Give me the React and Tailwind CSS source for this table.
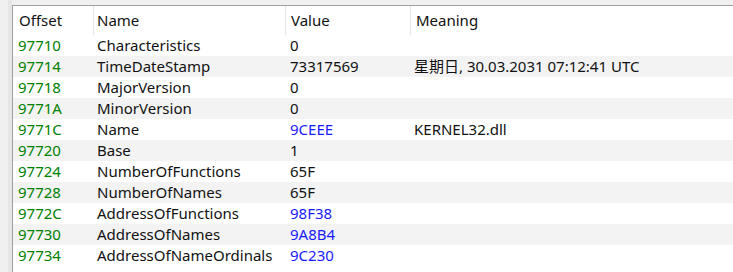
import React from "react";

const rows = [
  ["97710", "Characteristics", "0", false, ""],
  ["97714", "TimeDateStamp", "73317569", false, "星期日, 30.03.2031 07:12:41 UTC"],
  ["97718", "MajorVersion", "0", false, ""],
  ["9771A", "MinorVersion", "0", false, ""],
  ["9771C", "Name", "9CEEE", true, "KERNEL32.dll"],
  ["97720", "Base", "1", false, ""],
  ["97724", "NumberOfFunctions", "65F", false, ""],
  ["97728", "NumberOfNames", "65F", false, ""],
  ["9772C", "AddressOfFunctions", "98F38", true, ""],
  ["97730", "AddressOfNames", "9A8B4", true, ""],
  ["97734", "AddressOfNameOrdinals", "9C230", true, ""],
];

const font = { fontFamily: '"Noto Sans", "Noto Sans CJK SC", sans-serif' };

export default function App() {
  return (
    <div
      className="w-[733px] h-[272px] flex bg-[#f0f0f0] overflow-hidden text-[15px] leading-none text-[#111111]"
      style={font}
    >
      <div className="w-[8px] bg-[#f0f0f0]" />
      <div className="w-[4px] bg-[#e6e6e6]" />
      <div className="flex-1 flex flex-col">
        <div className="h-[5px] bg-[#f0f0f0]" />
        <div className="flex-1 bg-white border-t border-l border-[#a0a0a0]">
          <div className="grid grid-cols-[80px_192px_125px_1fr] h-[29px] items-center">
            <div className="pl-[6px]">Offset</div>
            <div className="h-full flex items-center border-l border-[#e5e5e5] pl-[3px]">Name</div>
            <div className="h-full flex items-center border-l border-[#e5e5e5] pl-[5px]">Value</div>
            <div className="h-full flex items-center border-l border-[#e5e5e5] pl-[5px]">Meaning</div>
          </div>
          {rows.map(([off, name, val, blue, meaning], i) => (
            <div
              key={off}
              className={`grid grid-cols-[80px_192px_125px_1fr] h-[21px] items-center ${
                i % 2 === 1 ? "bg-[#f3f3f3]" : "bg-white"
              }`}
            >
              <div className="pl-[5px] text-[#008000]">{off}</div>
              <div className="pl-[4px]">{name}</div>
              <div className={`pl-[5px] ${blue ? "text-[#1a1aff]" : ""}`}>{val}</div>
              <div className="pl-[4px]">{meaning}</div>
            </div>
          ))}
        </div>
      </div>
    </div>
  );
}
